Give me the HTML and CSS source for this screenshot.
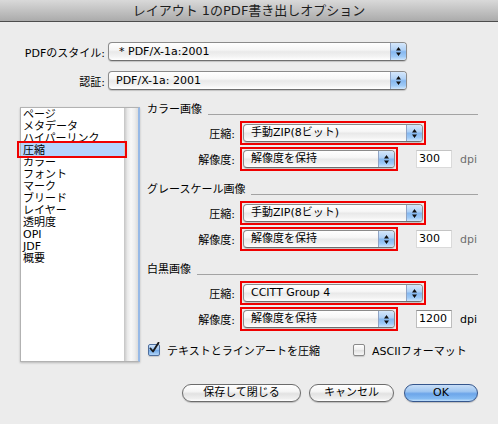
FILE: index.html
```html
<!DOCTYPE html>
<html lang="ja">
<head>
<meta charset="utf-8">
<title>PDF書き出しオプション</title>
<link rel="stylesheet" href="styles.css">
</head>
<body>
<div class="titlebar">レイアウト 1のPDF書き出しオプション</div>

<div class="top-form">
  <div class="form-row">
    <span class="top-label">PDFのスタイル:</span>
    <div class="popup popup-top">
      <span class="popup-text popup-text-star">* PDF/X-1a:2001</span>
      <span class="popup-arrows"><svg width="5" height="9" viewBox="0 0 5 9"><path d="M2.5 0 L5 3.5 L0 3.5Z M0 5.5 L5 5.5 L2.5 9Z" fill="#111"/></svg></span>
    </div>
  </div>
  <div class="form-row">
    <span class="top-label">認証:</span>
    <div class="popup popup-top">
      <span class="popup-text">PDF/X-1a: 2001</span>
      <span class="popup-arrows"><svg width="5" height="9" viewBox="0 0 5 9"><path d="M2.5 0 L5 3.5 L0 3.5Z M0 5.5 L5 5.5 L2.5 9Z" fill="#111"/></svg></span>
    </div>
  </div>
</div>

<div class="main">
  <div class="sidebar">
    <ul class="list">
      <li>ページ</li>
      <li>メタデータ</li>
      <li>ハイパーリンク</li>
      <li class="selected">圧縮</li>
      <li>カラー</li>
      <li>フォント</li>
      <li>マーク</li>
      <li>ブリード</li>
      <li>レイヤー</li>
      <li>透明度</li>
      <li>OPI</li>
      <li>JDF</li>
      <li>概要</li>
    </ul>
    <div class="scrolltrack"></div>
  </div>

  <div class="panel">
    <section class="group">
      <div class="group-head"><span>カラー画像</span><span class="rule"></span></div>
      <div class="row">
        <span class="row-label">圧縮:</span>
        <div class="hl">
          <div class="popup popup-wide">
            <span class="popup-text">手動ZIP(8ビット)</span>
            <span class="popup-arrows"><svg width="5" height="9" viewBox="0 0 5 9"><path d="M2.5 0 L5 3.5 L0 3.5Z M0 5.5 L5 5.5 L2.5 9Z" fill="#111"/></svg></span>
          </div>
        </div>
      </div>
      <div class="row">
        <span class="row-label">解像度:</span>
        <div class="hl">
          <div class="popup popup-narrow">
            <span class="popup-text">解像度を保持</span>
            <span class="popup-arrows"><svg width="5" height="9" viewBox="0 0 5 9"><path d="M2.5 0 L5 3.5 L0 3.5Z M0 5.5 L5 5.5 L2.5 9Z" fill="#111"/></svg></span>
          </div>
        </div>
        <div class="field field-dim">300</div>
        <span class="unit unit-dim">dpi</span>
      </div>
    </section>

    <section class="group">
      <div class="group-head"><span>グレースケール画像</span><span class="rule"></span></div>
      <div class="row">
        <span class="row-label">圧縮:</span>
        <div class="hl">
          <div class="popup popup-wide">
            <span class="popup-text">手動ZIP(8ビット)</span>
            <span class="popup-arrows"><svg width="5" height="9" viewBox="0 0 5 9"><path d="M2.5 0 L5 3.5 L0 3.5Z M0 5.5 L5 5.5 L2.5 9Z" fill="#111"/></svg></span>
          </div>
        </div>
      </div>
      <div class="row">
        <span class="row-label">解像度:</span>
        <div class="hl">
          <div class="popup popup-narrow">
            <span class="popup-text">解像度を保持</span>
            <span class="popup-arrows"><svg width="5" height="9" viewBox="0 0 5 9"><path d="M2.5 0 L5 3.5 L0 3.5Z M0 5.5 L5 5.5 L2.5 9Z" fill="#111"/></svg></span>
          </div>
        </div>
        <div class="field field-dim">300</div>
        <span class="unit unit-dim">dpi</span>
      </div>
    </section>

    <section class="group">
      <div class="group-head"><span>白黒画像</span><span class="rule"></span></div>
      <div class="row">
        <span class="row-label">圧縮:</span>
        <div class="hl">
          <div class="popup popup-wide">
            <span class="popup-text">CCITT Group 4</span>
            <span class="popup-arrows"><svg width="5" height="9" viewBox="0 0 5 9"><path d="M2.5 0 L5 3.5 L0 3.5Z M0 5.5 L5 5.5 L2.5 9Z" fill="#111"/></svg></span>
          </div>
        </div>
      </div>
      <div class="row">
        <span class="row-label">解像度:</span>
        <div class="hl">
          <div class="popup popup-narrow">
            <span class="popup-text">解像度を保持</span>
            <span class="popup-arrows"><svg width="5" height="9" viewBox="0 0 5 9"><path d="M2.5 0 L5 3.5 L0 3.5Z M0 5.5 L5 5.5 L2.5 9Z" fill="#111"/></svg></span>
          </div>
        </div>
        <div class="field">1200</div>
        <span class="unit">dpi</span>
      </div>
    </section>

    <div class="checks">
      <label class="check-item check-first">
        <span class="checkbox checked"><svg width="12" height="13" viewBox="0 0 12 13"><path d="M2.5 6.5 L5 9.5 L10.5 0.8" fill="none" stroke="#1b1b1b" stroke-width="1.9" stroke-linecap="round" stroke-linejoin="round"/></svg></span>
        <span>テキストとラインアートを圧縮</span>
      </label>
      <label class="check-item">
        <span class="checkbox"></span>
        <span>ASCIIフォーマット</span>
      </label>
    </div>
  </div>
</div>

<div class="buttons">
  <button class="btn btn-save">保存して閉じる</button>
  <button class="btn btn-cancel">キャンセル</button>
  <button class="btn btn-ok">OK</button>
</div>
</body>
</html>
```

FILE: styles.css
```css
* { box-sizing: border-box; }
html, body { margin: 0; padding: 0; }
body {
  width: 498px;
  height: 424px;
  overflow: hidden;
  background: #ececec;
  font-family: "DejaVu Sans", "Noto Sans CJK JP", sans-serif;
  font-size: 11px;
  color: #000;
}

/* title bar */
.titlebar {
  height: 22px;
  line-height: 21px;
  text-align: center;
  font-size: 13px;
  color: #1e1e1e;
  background: linear-gradient(#d9d9d9, #ababab);
  border-bottom: 1px solid #4d4d4d;
}

/* top form */
.top-form {
  display: flex;
  flex-direction: column;
  gap: 10px;
  padding-top: 20px;
}
.form-row {
  display: flex;
  align-items: center;
  height: 19px;
}
.top-label {
  width: 105px;
  margin-right: 3px;
  text-align: right;
  white-space: nowrap;
}

/* popup buttons */
.popup {
  display: flex;
  height: 18px;
  border: 1px solid #8b8b8b;
  border-bottom-color: #6f6f6f;
  border-radius: 4px;
  background: linear-gradient(#ffffff 0%, #f6f6f6 40%, #e9e9e9 52%, #f2f2f2 78%, #ffffff 100%);
  box-shadow: 0 1px 1px rgba(0, 0, 0, 0.18);
  overflow: hidden;
}
.popup-top { width: 299px; height: 19px; }
.popup-wide { width: 180px; }
.popup-narrow { width: 152px; }
.popup-text {
  flex: 1;
  padding-left: 7px;
  line-height: 16px;
  white-space: nowrap;
}
.popup-top .popup-text { line-height: 17px; }
.popup-text-star { padding-left: 10px; }
.popup-arrows {
  width: 16px;
  display: flex;
  align-items: center;
  justify-content: center;
  border-left: 1px solid #8fa3c4;
  background: linear-gradient(#d5e7fb 0%, #b1d2f6 40%, #86b8f0 52%, #9fcaf6 80%, #cfe6fc 100%);
}

/* main area */
.main {
  display: flex;
  align-items: flex-start;
  margin-top: 10px;
  padding-left: 20px;
}

.sidebar {
  display: flex;
  width: 120px;
  height: 255px;
  margin-top: 7px;
  border: 1px solid #b2b2b2;
  border-right: 2px solid #97b9e6;
  box-shadow: 0 1px 2px rgba(0, 0, 0, 0.22);
  background: #fff;
}
.list {
  width: 103px;
  margin: 0;
  padding: 1px 0 0;
  list-style: none;
  background: #fff;
}
.list li {
  height: 12px;
  line-height: 12px;
  padding-left: 2px;
  white-space: nowrap;
}
.list li.selected {
  position: relative;
  height: 14px;
  margin-top: -2px;
  padding-top: 2px;
  background: #b5d4fd;
}
.list li.selected::after {
  content: "";
  position: absolute;
  left: -4px;
  right: -3px;
  top: -2px;
  bottom: -1px;
  border: 2px solid #f00000;
}
.scrolltrack {
  flex: 1;
  background: linear-gradient(to right, #c4c4c4 0%, #e9e9e9 25%, #f8f8f8 50%, #eeeeee 75%, #dcdcdc 100%);
}

/* right panel */
.panel {
  width: 331px;
  margin-left: 7px;
}
.group { margin-bottom: 8px; }
.group-head {
  display: flex;
  height: 20px;
  line-height: 20px;
  white-space: nowrap;
}
.rule {
  flex: 1;
  height: 1px;
  margin-top: 14px;
  margin-left: 6px;
  background: #a3a3a3;
}
.row {
  display: flex;
  align-items: center;
  height: 26px;
}
.row-label {
  width: 88px;
  margin-right: 5px;
  text-align: right;
  white-space: nowrap;
}
.hl {
  border: 2px solid #f00000;
  padding: 1px;
}
.field {
  width: 36px;
  height: 18px;
  margin-left: 18px;
  padding-left: 2px;
  line-height: 16px;
  background: #fff;
  border: 1px solid #bdbdbd;
  border-top-color: #8c8c8c;
}
.field-dim {
  border-color: #dadada;
  border-top-color: #c4c4c4;
}
.unit { margin-left: 8px; }
.unit-dim { color: #6e6e6e; }

/* checkboxes */
.checks {
  display: flex;
  align-items: center;
  height: 20px;
  margin-top: 4px;
  padding-left: 1px;
}
.check-item {
  display: flex;
  align-items: center;
  white-space: nowrap;
}
.check-first { width: 205px; }
.checkbox {
  position: relative;
  width: 12px;
  height: 12px;
  margin-right: 7px;
  border: 1px solid #8a8a8a;
  border-radius: 2px;
  background: linear-gradient(#ffffff, #ededed 50%, #e2e2e2 55%, #f7f7f7);
  box-shadow: 0 1px 1px rgba(0, 0, 0, 0.15);
}
.checkbox.checked {
  border-color: #4f6f9e;
  background: linear-gradient(#cfe3f9, #97c1ef 48%, #74aae8 55%, #b0d4f7);
}
.checkbox svg {
  position: absolute;
  left: -1px;
  top: -3px;
}

/* buttons */
.buttons {
  display: flex;
  justify-content: flex-end;
  gap: 8px;
  margin-top: 22px;
  padding-right: 20px;
}
.btn {
  height: 18px;
  padding: 0;
  font-family: "DejaVu Sans", "Noto Sans CJK JP", sans-serif;
  font-size: 11px;
  line-height: 16px;
  color: #000;
  border: 1px solid #6c6c6c;
  border-radius: 9px;
  background: linear-gradient(#ffffff 0%, #f5f5f5 40%, #e2e2e2 55%, #efefef 85%, #ffffff 100%);
  box-shadow: 0 1px 1px rgba(0, 0, 0, 0.2);
}
.btn-save { width: 119px; }
.btn-cancel { width: 85px; }
.btn-ok {
  width: 74px;
  margin-left: 2px;
  border-color: #35568c;
  background: linear-gradient(#c8def7 0%, #9fc6f1 40%, #6ca5e9 55%, #84bbf3 85%, #c2e0fb 100%);
}
```
